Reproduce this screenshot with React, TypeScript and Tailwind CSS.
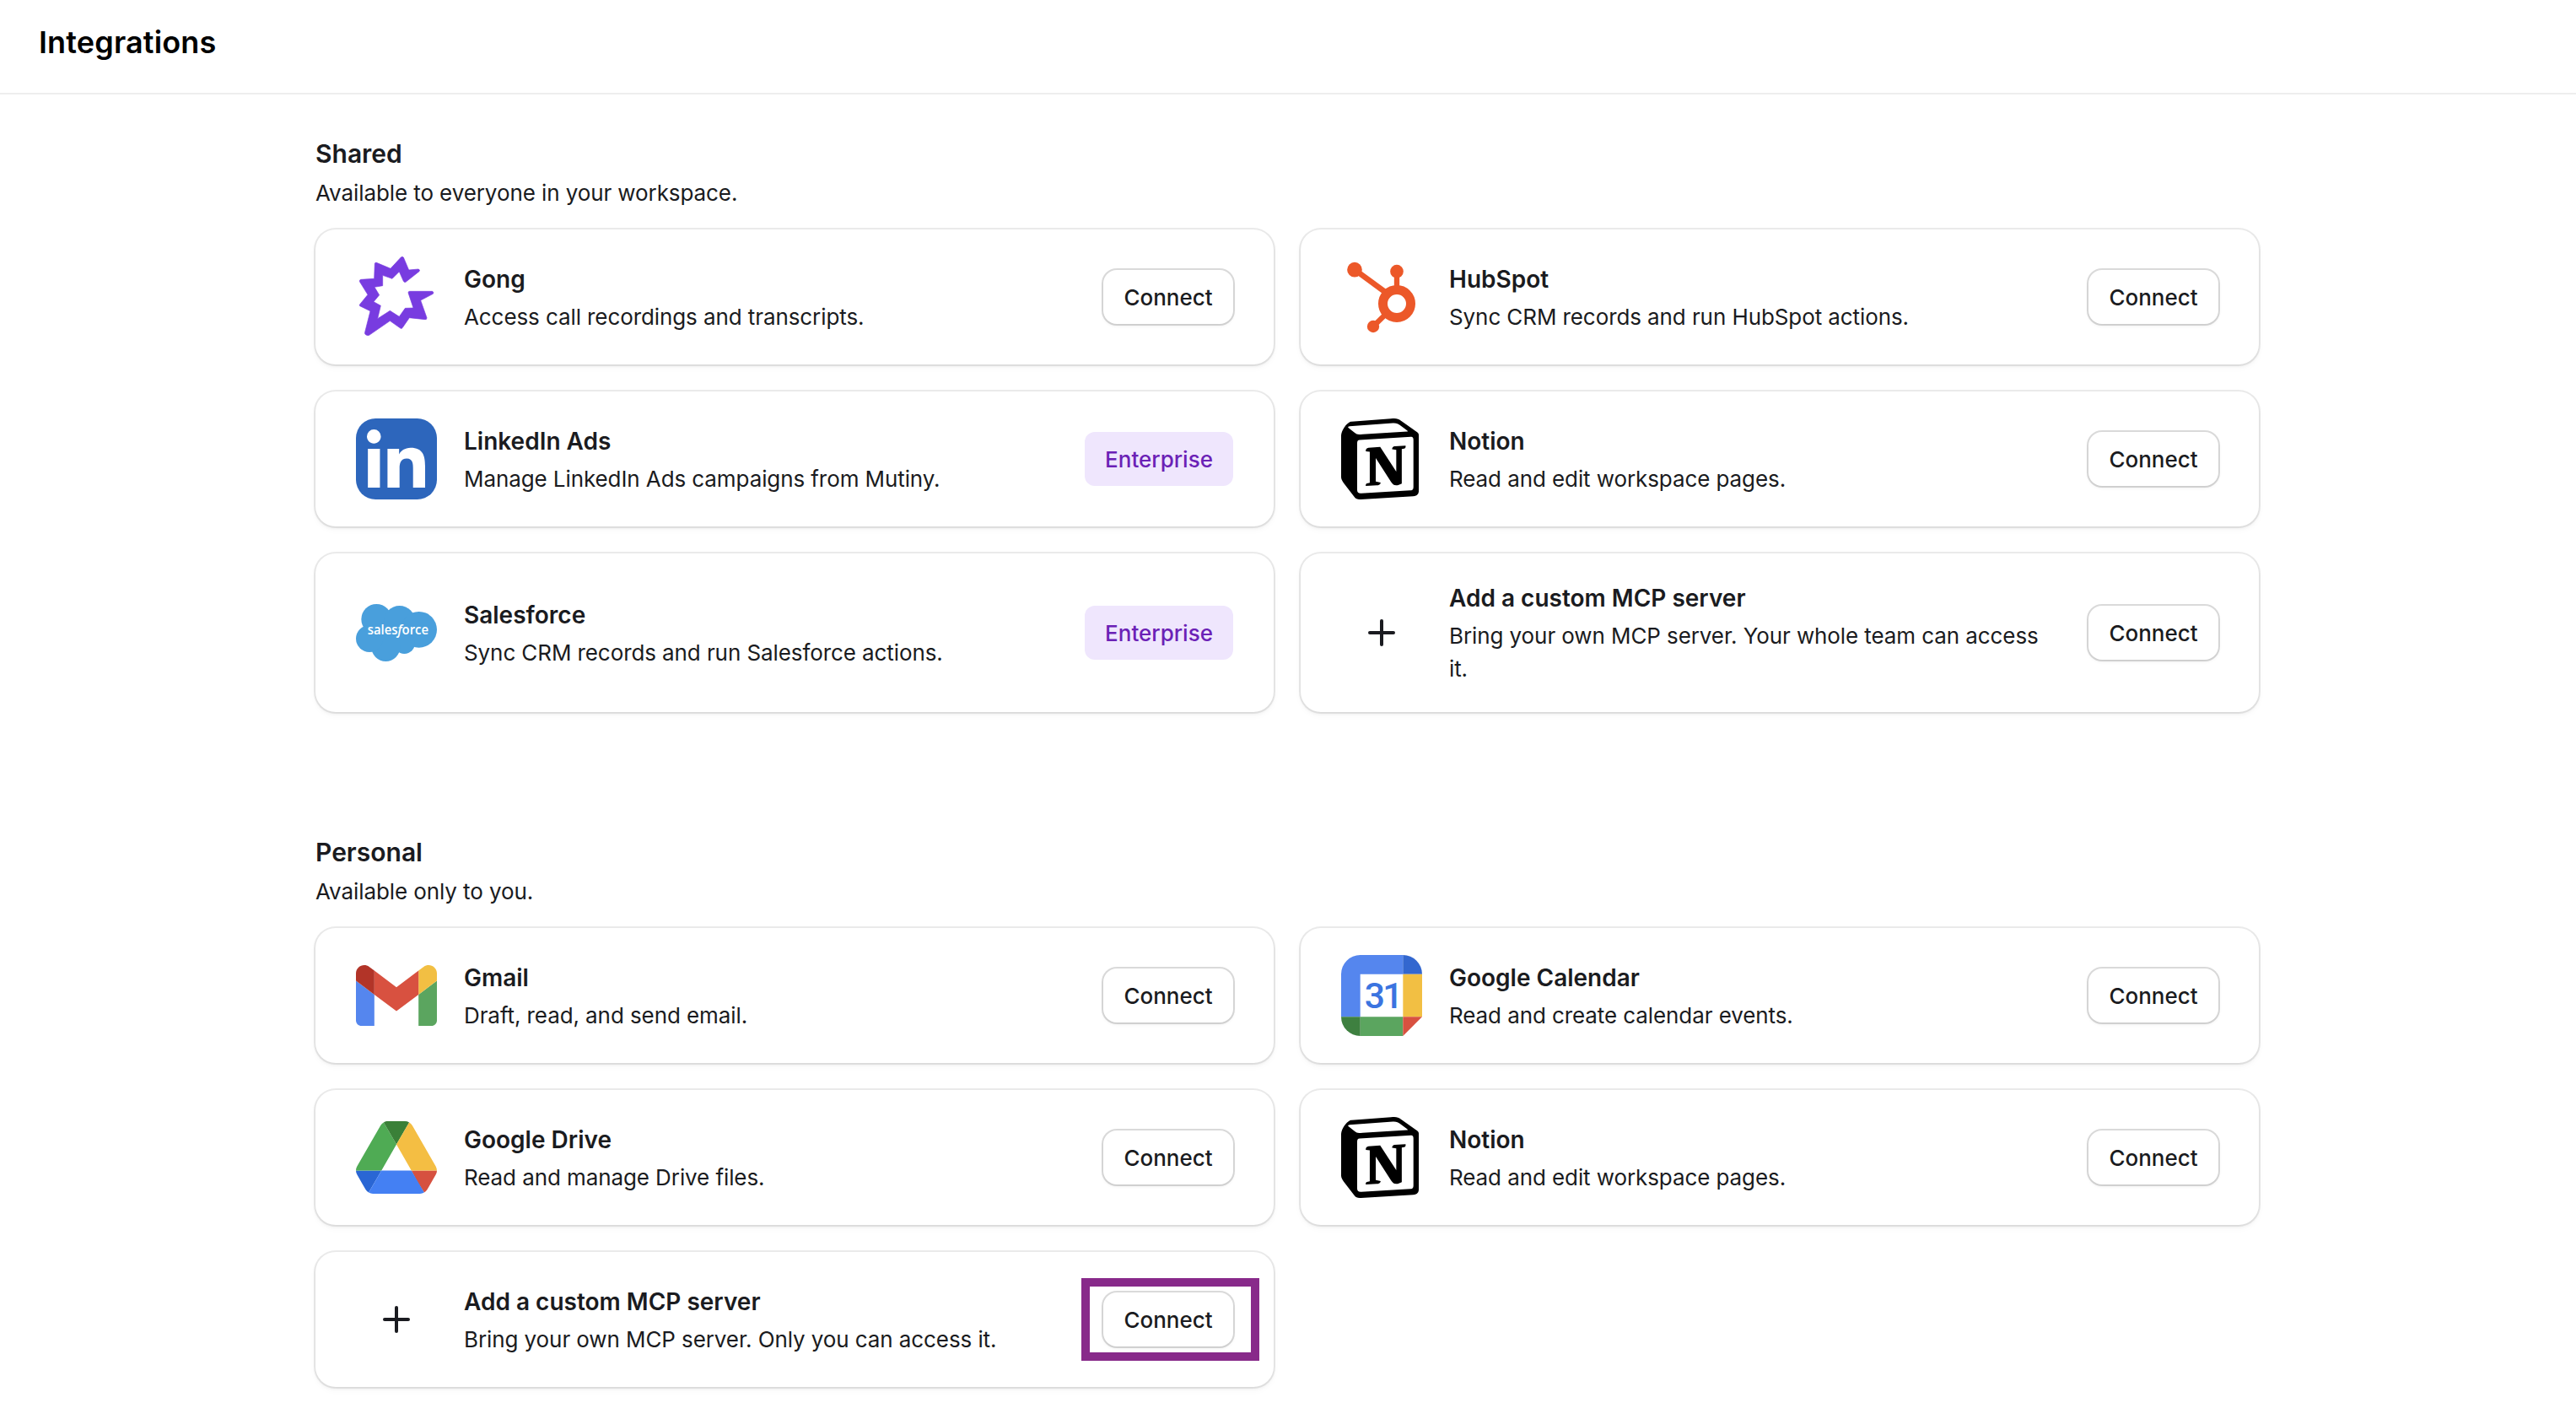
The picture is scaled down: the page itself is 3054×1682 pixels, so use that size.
import { Plus } from "lucide-react";
import { FaLinkedinIn } from "react-icons/fa";
import { SiNotion } from "react-icons/si";

interface Integration {
  name: string;
  description: string;
  icon: React.ReactNode;
  enterprise?: boolean;
  highlighted?: boolean;
}

/*******************
 * Logos
 */

const Gong = () => (
  <svg viewBox="66 72 288 288" className="size-24">
    <path
      fill="#783ce0"
      stroke="#783ce0"
      strokeWidth="2"
      strokeLinejoin="round"
      d="M226 75Q230 71 235 75L254 120L288 117Q295 119 291 125L243 163Q238 165 235 160L220 126L195 151L161 139V176L132 181L149 209L129 233L154 247L143 293L187 265L220 286L241 256L270 255L252 201Q252 196 257 196H338Q344 199 340 205L296 228L318 290Q318 297 312 296L256 290L231 326Q228 330 224 327L187 301L113 352Q106 355 99 349Q97 346 98 341L117 266L80 248Q77 246 80 242L108 208L79 161Q78 155 84 154L131 151L133 97Q134 93 139 94L189 115Z"
    />
  </svg>
);

const HubSpot = () => (
  <svg viewBox="60 72 288 288" className="size-24">
    <g fill="none" stroke="#ec5829">
      <circle cx="258" cy="240" r="49.5" strokeWidth="33" />
      <path d="M258 125V180" strokeWidth="19" />
      <path d="M108 119L216 198" strokeWidth="20" />
      <path d="M174 321L216 280" strokeWidth="19" />
    </g>
    <g fill="#ec5829">
      <circle cx="108" cy="119" r="26.5" />
      <circle cx="258" cy="125" r="23.5" />
      <circle cx="174" cy="321" r="21.5" />
    </g>
  </svg>
);

const LinkedIn = () => (
  <svg viewBox="66 48 288 288" className="size-24">
    <rect x="66" y="48" width="288" height="288" rx="70" fill="#2d66bc" />
    <FaLinkedinIn x="90.2" y="87" size="236.6" color="#fff" />
  </svg>
);

const Salesforce = () => (
  <svg viewBox="66 666 288 288" className="size-24">
    <g fill="#499fdc">
      <circle cx="139" cy="762" r="54" />
      <circle cx="221" cy="770" r="56" />
      <circle cx="290" cy="799" r="64" />
      <circle cx="238" cy="847" r="38" />
      <circle cx="172" cy="861" r="51" />
      <circle cx="114" cy="831" r="48" />
      <rect x="120" y="780" width="140" height="60" />
    </g>
    <text
      x="107"
      y="817"
      fill="#fff"
      fontFamily="'Open Sans', sans-serif"
      fontSize="46"
      fontWeight="600"
      textLength="217"
      lengthAdjust="spacingAndGlyphs"
    >
      sales<tspan fontStyle="italic">f</tspan>orce
    </text>
  </svg>
);

// The cube's top left corner is bevelled, so the stock glyph is clipped there
const Notion = () => (
  <svg viewBox="60 48 288 288" className="size-24">
    <clipPath id="notion-cube">
      <path d="M92 60L98 48H348V336H60V108C62 90 76 68 92 60Z" />
    </clipPath>
    <g clipPath="url(#notion-cube)">
      <SiNotion x="54" y="48" size="288" color="#000" />
    </g>
  </svg>
);

const Gmail = () => (
  <svg viewBox="52 31 88 88" className="size-24">
    <path fill="#5586ee" d="M58 108h14V74L52 59v43c0 3.32 2.69 6 6 6" />
    <path fill="#5ba55f" d="M120 108h14c3.32 0 6-2.69 6-6V59l-20 15" />
    <path fill="#f2bf43" d="M120 48v26l20-15v-8c0-7.42-8.47-11.65-14.4-7.2" />
    <path fill="#d85140" d="M72 74V48l24 18 24-18v26L96 92" />
    <path fill="#b23428" d="M52 51v8l20 15V48l-5.6-4.2c-5.94-4.45-14.4-.22-14.4 7.2" />
  </svg>
);

const GoogleDrive = () => (
  <svg viewBox="0 -4.65 87.3 87.3" className="size-24">
    <path fill="#2a66d4" d="m6.6 66.85 3.85 6.65c.8 1.4 1.95 2.5 3.3 3.3l13.75-23.8h-27.5c0 1.55.4 3.1 1.2 4.5z" />
    <path fill="#4fab54" d="m43.65 25-13.75-23.8c-1.35.8-2.5 1.9-3.3 3.3l-25.4 44a9.06 9.06 0 0 0 -1.2 4.5h27.5z" />
    <path fill="#d65140" d="m73.55 76.8c1.35-.8 2.5-1.9 3.3-3.3l1.6-2.75 7.65-13.25c.8-1.4 1.2-2.95 1.2-4.5h-27.5l5.85 11.5z" />
    <path fill="#3a8038" d="m43.65 25 13.75-23.8c-1.35-.8-2.9-1.2-4.5-1.2h-18.5c-1.6 0-3.15.45-4.5 1.2z" />
    <path fill="#4480f3" d="m59.8 53h-32.3l-13.75 23.8c1.35.8 2.9 1.2 4.5 1.2h50.8c1.6 0 3.15-.45 4.5-1.2z" />
    <path fill="#f4be43" d="m73.4 26.5-12.7-22c-.8-1.4-1.95-2.5-3.3-3.3l-13.75 23.8 16.15 28h27.45c0-1.55-.4-3.1-1.2-4.5z" />
  </svg>
);

const GoogleCalendar = () => (
  <svg viewBox="60 36 288 288" className="size-24">
    <path fill="#5586ee" d="M128 36H280V104H128V256H60V104A68 68 0 0 1 128 36Z" />
    <path fill="#3367cf" d="M280 36A68 68 0 0 1 348 104H280Z" />
    <path fill="#f2bf43" d="M280 104H348V256H280Z" />
    <path fill="#5ba55f" d="M128 256H280V324H128Z" />
    <path fill="#3e8040" d="M60 256H128V324A68 68 0 0 1 60 256Z" />
    <path fill="#d85140" d="M280 256H348L280 324Z" />
    <text x="143 208" y="226" fill="#3b74e0" fontFamily="Roboto, sans-serif" fontSize="128" fontWeight="500">
      31
    </text>
  </svg>
);

const CustomServer = () => <Plus className="size-12 text-[#1a1b20]" strokeWidth={2} />;

/*******************
 * Data
 */

const shared: Integration[] = [
  { name: "Gong", description: "Access call recordings and transcripts.", icon: <Gong /> },
  { name: "HubSpot", description: "Sync CRM records and run HubSpot actions.", icon: <HubSpot /> },
  {
    name: "LinkedIn Ads",
    description: "Manage LinkedIn Ads campaigns from Mutiny.",
    icon: <LinkedIn />,
    enterprise: true,
  },
  { name: "Notion", description: "Read and edit workspace pages.", icon: <Notion /> },
  {
    name: "Salesforce",
    description: "Sync CRM records and run Salesforce actions.",
    icon: <Salesforce />,
    enterprise: true,
  },
  {
    name: "Add a custom MCP server",
    description: "Bring your own MCP server. Your whole team can access it.",
    icon: <CustomServer />,
  },
];

const personal: Integration[] = [
  { name: "Gmail", description: "Draft, read, and send email.", icon: <Gmail /> },
  { name: "Google Calendar", description: "Read and create calendar events.", icon: <GoogleCalendar /> },
  { name: "Google Drive", description: "Read and manage Drive files.", icon: <GoogleDrive /> },
  { name: "Notion", description: "Read and edit workspace pages.", icon: <Notion /> },
  {
    name: "Add a custom MCP server",
    description: "Bring your own MCP server. Only you can access it.",
    icon: <CustomServer />,
    highlighted: true,
  },
];

const App: React.FC = () => (
  <div className="min-h-[1682px] bg-white font-['Inter',sans-serif] text-[#1a1b20]">
    <header className="h-28 border-b-2 border-[#eeeeee] px-[46px] pt-[23px]">
      <h1 className="text-[36px] leading-[54px] font-semibold tracking-[0.15px] text-black">Integrations</h1>
    </header>
    <main className="ml-[374px] flex w-[2304px] flex-col gap-36 pt-12">
      <Section title="Shared" subtitle="Available to everyone in your workspace." items={shared} />
      <Section title="Personal" subtitle="Available only to you." items={personal} />
    </main>
  </div>
);

export default App;

/*******************
 * Components
 */

const Section = (props: { title: string; subtitle: string; items: Integration[] }) => (
  <section>
    <h2 className="text-[30px] leading-[45px] font-semibold">{props.title}</h2>
    <p className="mt-1 text-[26px] leading-[39px] tracking-[-0.09px]">{props.subtitle}</p>
    <div className="mt-6 grid grid-cols-2 gap-8">
      {props.items.map((item) => (
        <Card key={item.name} {...item} />
      ))}
    </div>
  </section>
);

const Card = ({ name, description, icon, enterprise, highlighted }: Integration) => (
  <div className="flex items-center gap-8 rounded-3xl bg-white px-12 py-8 shadow-[0_0_0_2px_rgba(0,0,0,0.08),0_2px_4px_rgba(0,0,0,0.06),0_4px_8px_rgba(0,0,0,0.03)]">
    <div className="flex size-24 shrink-0 items-center justify-center">{icon}</div>
    <div className="flex min-w-0 flex-1 flex-col gap-1">
      <h3 className="text-[28px] leading-[42px] font-semibold">{name}</h3>
      <p className="text-[26px] leading-[39px] tracking-[-0.09px]">{description}</p>
    </div>
    {enterprise ? (
      <span className="flex h-16 w-44 shrink-0 items-center justify-center rounded-xl bg-[#efe6fd] text-[26px] font-medium text-[#6b21b6]">
        Enterprise
      </span>
    ) : (
      <div className="relative shrink-0">
        <button className="flex h-16 w-[154px] items-center justify-center rounded-2xl bg-white text-[26px] font-medium shadow-[0_0_0_2px_rgba(0,0,0,0.14),0_2px_4px_rgba(0,0,0,0.08)]">
          Connect
        </button>
        {highlighted && (
          <div className="absolute -top-[17px] -left-[26px] h-[98px] w-[211px] border-[10px] border-[#882a8a]" />
        )}
      </div>
    )}
  </div>
);
